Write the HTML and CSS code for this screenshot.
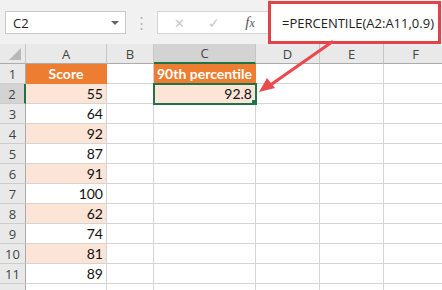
FILE: index.html
```html
<!DOCTYPE html>
<html lang="en">
<head>
    <meta charset="UTF-8">
    <title>PERCENTILE example</title>
    <link rel="stylesheet" href="styles.css">
</head>
<body>
    <div class="window">
        <div class="toolbar">
            <div class="name-box">
                <span>C2</span>
                <span class="caret"></span>
            </div>
            <div class="grip">&#8942;</div>
            <div class="fx-box">
                <span class="fx-btn cancel">&#x2715;</span>
                <span class="fx-btn enter">&#x2713;</span>
                <span class="fx-btn fx"><i>f</i><i class="x">x</i></span>
            </div>
            <div class="formula">=PERCENTILE(A2:A11,0.9)</div>
        </div>

        <div class="sheet">
            <div class="hd corner"><span class="tri"></span></div>
            <div class="hd col">A</div>
            <div class="hd col">B</div>
            <div class="hd col sel-col">C</div>
            <div class="hd col">D</div>
            <div class="hd col">E</div>
            <div class="hd col">F</div>

            <div class="hd row">1</div>
            <div class="cell title">Score</div>
            <div class="cell"></div>
            <div class="cell title">90th percentile</div>
            <div class="cell"></div>
            <div class="cell"></div>
            <div class="cell"></div>

            <div class="hd row sel-row">2</div>
            <div class="cell num band">55</div>
            <div class="cell"></div>
            <div class="cell num band active">92.8</div>
            <div class="cell"></div>
            <div class="cell"></div>
            <div class="cell"></div>
        </div>
        <div class="sheet" id="rows"></div>

        <svg class="arrow" width="90" height="60" viewBox="0 0 90 60">
            <line x1="77" y1="4" x2="14" y2="48" stroke="#ea4a4e" stroke-width="3.2" stroke-linecap="round"/>
            <polygon points="4,54 12,40 20,50" fill="#ea4a4e"/>
        </svg>
    </div>

    <script>
        // rows 3..11, then the top of row 12 (label falls below the fold)
        const scores = [64, 92, 87, 91, 100, 62, 74, 81, 89, ''];
        const rows = document.getElementById('rows');
        scores.forEach((value, i) => {
            const n = i + 3;
            const band = n % 2 === 0 && n < 12 ? ' band' : '';
            let html = `<div class="hd row">${n < 12 ? n : ''}</div>`;
            html += `<div class="cell num${band}">${value}</div>`;
            for (let c = 0; c < 5; c++) html += '<div class="cell"></div>';
            rows.insertAdjacentHTML('beforeend', html);
        });
    </script>
</body>
</html>
```

FILE: styles.css
```css
* {
    box-sizing: border-box;
}

body {
    margin: 0;
    background-color: #ffffff;
    font-family: "Open Sans", "Noto Sans", sans-serif;
    overflow: hidden;
}

.window {
    position: relative;
    width: 442px;
    height: 290px;
    overflow: hidden;
}

/* formula bar */
.toolbar {
    height: 44px;
    background-color: #f1f1f1;
    display: flex;
    align-items: flex-start;
}

.name-box {
    margin: 11px 0 0 5px;
    width: 121px;
    height: 23px;
    background-color: #fff;
    border: 1px solid #c8c8c8;
    display: flex;
    align-items: center;
    justify-content: space-between;
    padding: 0 6px 0 7px;
    font-size: 13px;
    color: #222;
}

.caret {
    width: 0;
    height: 0;
    border-left: 4px solid transparent;
    border-right: 4px solid transparent;
    border-top: 4px solid #666;
}

.grip {
    margin: 13px 0 0 0;
    width: 31px;
    text-align: center;
    color: #b4b4b4;
    font-size: 15px;
    line-height: 18px;
}

.fx-box {
    margin-top: 11px;
    width: 111px;
    height: 23px;
    background-color: #fff;
    border: 1px solid #d4d4d4;
    border-right: none;
    display: flex;
    align-items: center;
}

.fx-btn {
    color: #c8c8c8;
    font-size: 14px;
    text-align: center;
}

.cancel {
    width: 20px;
    margin-left: 11px;
    font-size: 13px;
}

.enter {
    width: 20px;
    margin-left: 15px;
}

.fx {
    width: 22px;
    margin-left: 15px;
    color: #555;
    font-family: "Liberation Serif", serif;
    font-size: 15px;
}

.fx .x {
    font-size: 12px;
}

.formula {
    margin-top: 1px;
    width: 173px;
    height: 43px;
    border: 3px solid #e2434a;
    background-color: #fff;
    padding-left: 11px;
    display: flex;
    align-items: center;
    font-size: 13px;
    color: #222;
    white-space: nowrap;
}

/* grid */
.sheet {
    display: grid;
    grid-template-columns: 26px 81px 47px 102px 64px 64px 64px;
    grid-auto-rows: 20px;
    width: 448px;
    font-family: "Lato", "Open Sans", sans-serif;
    font-size: 14px;
}

.hd {
    background-color: #e9e9e9;
    color: #444;
    display: flex;
    align-items: center;
    justify-content: center;
    font-family: "Open Sans", sans-serif;
    font-size: 13px;
}

.col {
    border-right: 1px solid #c6c6c6;
    border-bottom: 1px solid #ababab;
}

.corner {
    border-right: 1px solid #c6c6c6;
    border-bottom: 1px solid #ababab;
    align-items: flex-end;
    justify-content: flex-end;
    padding: 0 4px 3px 0;
}

.tri {
    width: 0;
    height: 0;
    border-left: 12px solid transparent;
    border-bottom: 12px solid #b8b8b8;
}

.row {
    border-right: 1px solid #ababab;
    border-bottom: 1px solid #cdcdcd;
}

.sel-col {
    background-color: #d3d3d3;
    border-bottom: 2px solid #217346;
}

.sel-row {
    background-color: #d3d3d3;
    border-right: 2px solid #217346;
}

.cell {
    border-right: 1px solid #d4d4d4;
    border-bottom: 1px solid #d4d4d4;
    color: #111;
    display: flex;
    align-items: center;
    overflow: hidden;
    white-space: nowrap;
}

.title {
    background-color: #ed7d31;
    border-color: #ed7d31;
    color: #fff;
    font-weight: bold;
    justify-content: center;
}

.num {
    justify-content: flex-end;
    padding-right: 3px;
}

.band {
    background-color: #fce4d6;
}

.active {
    position: relative;
    outline: 2px solid #217346;
    outline-offset: -1px;
}

.active::after {
    content: "";
    position: absolute;
    right: -4px;
    bottom: -4px;
    width: 6px;
    height: 6px;
    background-color: #217346;
    border: 1px solid #fff;
}

.arrow {
    position: absolute;
    left: 255px;
    top: 38px;
}
```
